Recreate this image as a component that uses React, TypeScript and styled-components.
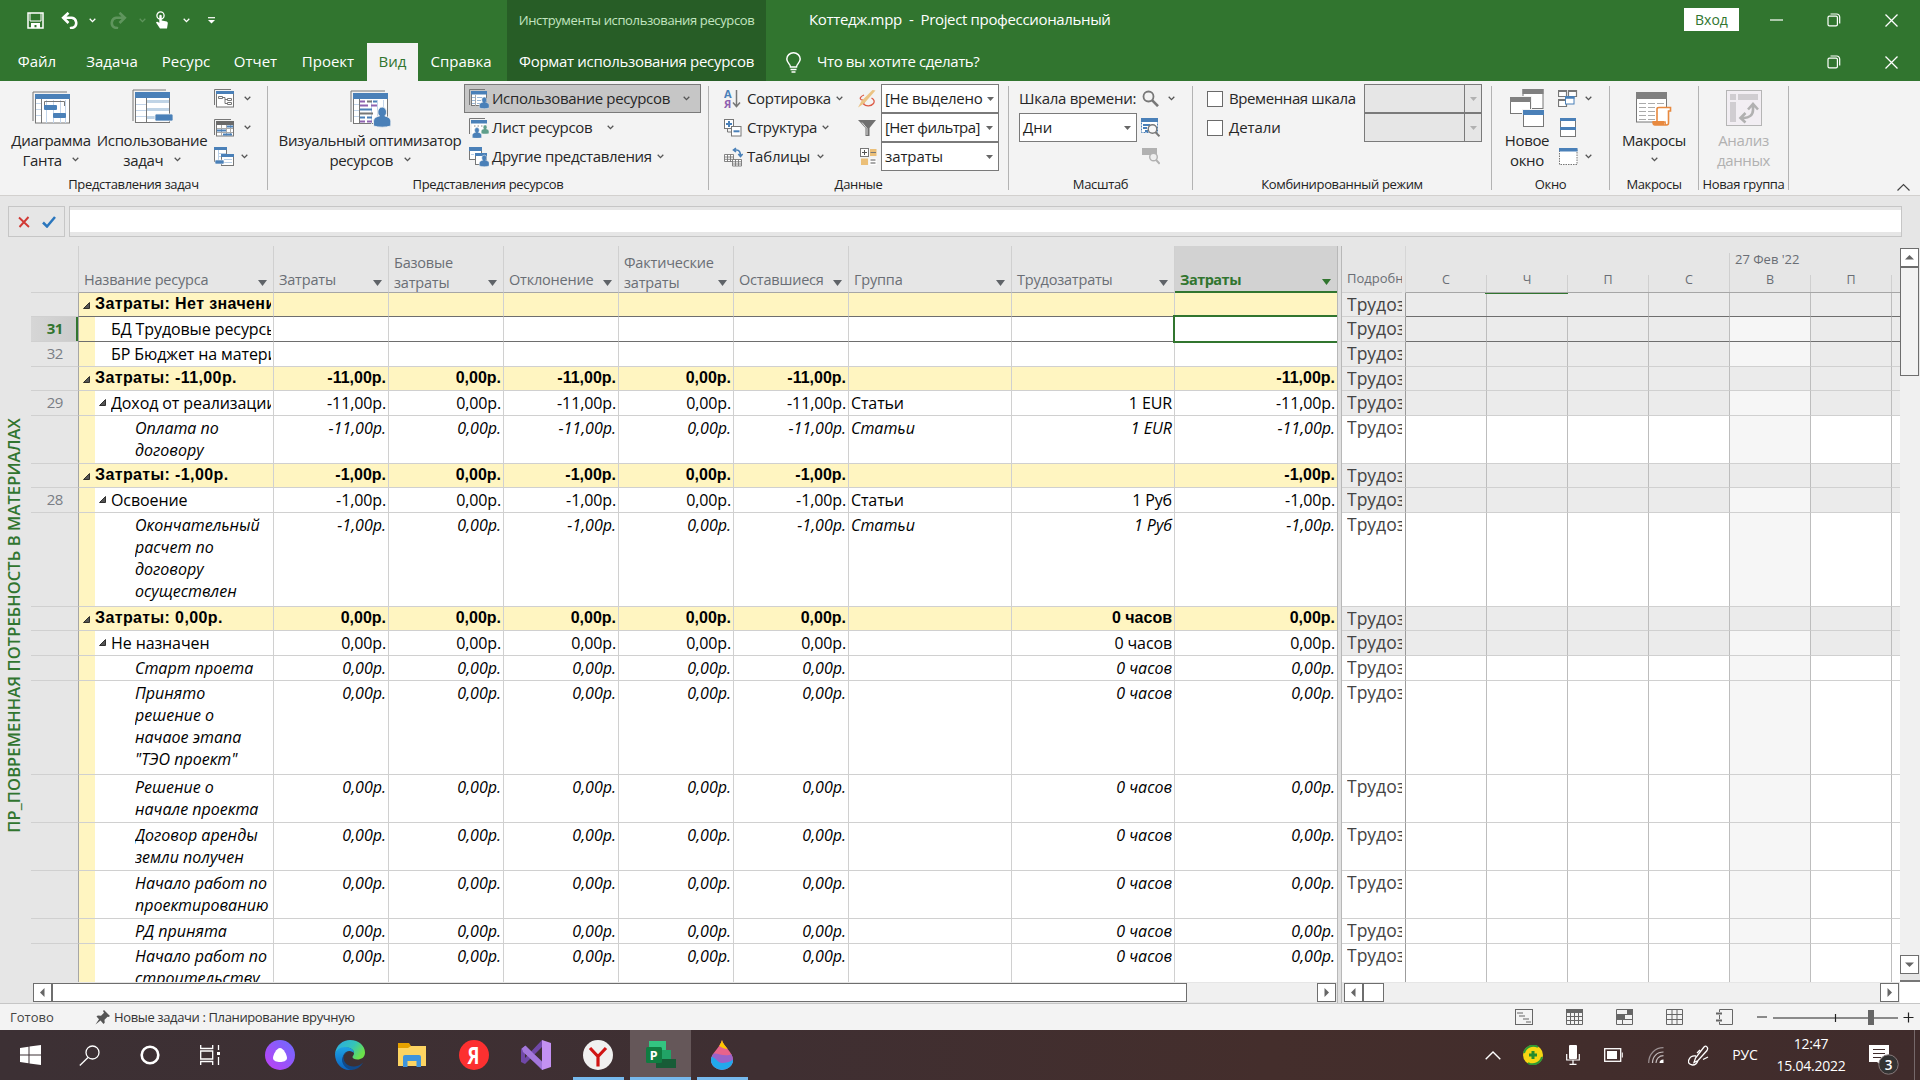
import React from "react";
import styled, { createGlobalStyle, css } from "styled-components";

const UI = `"Open Sans", "Noto Sans", sans-serif`;
const GREEN = "#31752f";

const Global = createGlobalStyle`
  * { box-sizing: border-box; }
  body { margin: 0; background: #e6e6e6; overflow: hidden; font-family: ${UI}; }
  svg { display: block; flex: none; }
`;

const Screen = styled.div`
  width: 1920px;
  height: 1080px;
  display: flex;
  flex-direction: column;
  background: #e6e6e6;
  font-family: ${UI};
  font-size: 15px;
  color: #262626;
  white-space: pre;
`;

const T = styled.span<{ $ls?: number; $size?: number }>`
  margin-bottom: 2px;
  letter-spacing: ${(p) => p.$ls ?? -0.33}px;
  ${(p) => p.$size && css`font-size: ${p.$size}px;`}
`;

/* ---------- title bar and tabs ---------- */
const Head = styled.header`
  height: 81px;
  flex: none;
  display: grid;
  grid-template-columns: 507px 259px 1fr;
  background: ${GREEN};
  color: #fff;
`;
const HeadPart = styled.div<{ $dark?: boolean }>`
  display: grid;
  grid-template-rows: 43px 38px;
  background: ${(p) => (p.$dark ? "#275d26" : "transparent")};
`;
const HeadRow = styled.div<{ $pad?: number; $up?: number }>`
  display: flex;
  align-items: center;
  padding-left: ${(p) => p.$pad ?? 0}px;
  padding-bottom: ${(p) => p.$up ?? 0}px;
`;
const Slot = styled.div<{ $w: number }>`
  width: ${(p) => p.$w}px;
  height: 100%;
  flex: none;
  display: flex;
  align-items: center;
  justify-content: center;
`;
const Tab = styled.div<{ $w: number; $active?: boolean }>`
  width: ${(p) => p.$w}px;
  height: 38px;
  display: flex;
  align-items: center;
  justify-content: center;
  padding-bottom: 3px;
  flex: none;
  background: ${(p) => (p.$active ? "#f3f3f3" : "transparent")};
  color: ${(p) => (p.$active ? GREEN : "#fff")};
`;
const ContextTitle = styled.div`
  display: flex;
  align-items: center;
  justify-content: center;
  color: #c3e5c0;
  font-size: 13px;
  letter-spacing: -0.37px;
  padding-bottom: 4px;
`;
const ContextTab = styled.div`
  display: flex;
  align-items: center;
  justify-content: center;
  letter-spacing: -0.3px;
  padding-bottom: 3px;
`;
const Title = styled.div`
  width: 918px;
  padding: 0 0 3px 43px;
  letter-spacing: -0.34px;
`;
const SignIn = styled.div`
  width: 55px;
  height: 23px;
  margin-bottom: 1px;
  background: #fff;
  color: ${GREEN};
  display: flex;
  align-items: center;
  justify-content: center;
  font-size: 14px;
`;
const Hint = styled.div`
  width: 1021px;
  padding: 0 0 2px 16px;
  letter-spacing: -0.38px;
`;

/* ---------- ribbon ---------- */
const Ribbon = styled.div`
  height: 115px;
  flex: none;
  display: flex;
  background: #f3f3f3;
  border-bottom: 1px solid #d2d0ce;
`;
const Group = styled.section<{ $w: number }>`
  width: ${(p) => p.$w}px;
  height: 104px;
  margin-top: 5px;
  border-right: 1px solid #b3b3b3;
  flex: none;
  display: flex;
  flex-direction: column;
`;
const GroupBody = styled.div`
  height: 87px;
  margin-top: -2px;
  display: flex;
`;
const GroupLabel = styled.div`
  height: 19px;
  line-height: 27px;
  font-size: 13px;
  letter-spacing: -0.35px;
  text-align: center;
  color: #222;
`;
const Big = styled.div<{ $w: number; $ml?: number; $off?: boolean }>`
  width: ${(p) => p.$w}px;
  margin-left: ${(p) => p.$ml ?? 0}px;
  flex: none;
  display: flex;
  flex-direction: column;
  align-items: center;
  color: ${(p) => (p.$off ? "#b1b1b1" : "#262626")};
`;
const BigIcon = styled.div<{ $pb?: number }>`
  height: 46px;
  display: flex;
  align-items: flex-end;
  padding-bottom: ${(p) => p.$pb ?? 3}px;
`;
const BigLine = styled.div`
  height: 20px;
  line-height: 20px;
  letter-spacing: -0.35px;
  display: flex;
  align-items: center;
  gap: 7px;
  svg { margin-bottom: 2px; }
`;
const Col = styled.div<{ $ml?: number; $w?: number }>`
  margin-left: ${(p) => p.$ml ?? 0}px;
  ${(p) => p.$w && css`width: ${p.$w}px;`}
  flex: none;
  display: grid;
  grid-template-rows: repeat(3, 29px);
`;
const Item = styled.div<{ $on?: boolean; $gap?: number; $pad?: number }>`
  display: flex;
  align-items: center;
  gap: ${(p) => p.$gap ?? 4}px;
  padding-left: ${(p) => p.$pad ?? 0}px;
  ${(p) => p.$on && css`
    background: #c6c6c6;
    box-shadow: inset 0 0 0 1px #7a7a7a;
  `}
`;
const Combo = styled.div<{ $off?: boolean }>`
  width: 118px;
  height: 29px;
  display: flex;
  align-items: center;
  justify-content: space-between;
  padding-left: 3px;
  border: 1px solid #7a7a7a;
  background: ${(p) => (p.$off ? "#e6e6e6" : "#fff")};
  color: #1e1e1e;
`;
const ComboArrow = styled.div<{ $off?: boolean }>`
  width: 17px;
  height: 27px;
  flex: none;
  display: flex;
  align-items: center;
  justify-content: center;
  border-left: ${(p) => (p.$off ? "1px solid #7a7a7a" : "none")};
`;
const Box = styled.span`
  width: 16px;
  height: 16px;
  flex: none;
  border: 1px solid #6a6a6a;
  background: #fff;
`;
const Collapse = styled.div`
  flex: 1;
  display: flex;
  align-items: flex-end;
  justify-content: flex-end;
  padding: 0 10px 4px 0;
`;

/* ---------- entry bar ---------- */
const Entry = styled.div`
  height: 50px;
  flex: none;
  display: flex;
  padding: 10px 18px 9px 8px;
  gap: 4px;
`;
const EntryButtons = styled.div`
  width: 57px;
  border: 1px solid #c6c6c6;
  display: flex;
  align-items: center;
  justify-content: center;
  gap: 12px;
`;
const EntryField = styled.div`
  flex: 1;
  border: 1px solid #c6c6c6;
  padding: 3px 0 4px;
  display: flex;
`;
const EntryInner = styled.div`
  flex: 1;
  background: #fff;
`;

/* ---------- work area ---------- */
const Work = styled.main`
  height: 757px;
  flex: none;
  display: flex;
`;
const Side = styled.aside`
  width: 31px;
  flex: none;
  display: flex;
  align-items: center;
  justify-content: center;
  padding: 2px 4px 0 0;
`;
const SideText = styled.div`
  writing-mode: vertical-rl;
  transform: rotate(180deg);
  color: ${GREEN};
  font-weight: 600;
  font-size: 16.5px;
  letter-spacing: 0.1px;
  white-space: nowrap;
`;
const Pane = styled.div<{ $w: number }>`
  width: ${(p) => p.$w}px;
  flex: none;
  display: flex;
  flex-direction: column;
`;
const TABLE_COLS = "47px 196px repeat(5, 115px) 163px 163px 162px";
const TableHead = styled.div`
  height: 47px;
  flex: none;
  display: grid;
  grid-template-columns: ${TABLE_COLS};
`;
const HeadCell = styled.div<{ $sel?: boolean; $first?: boolean; $corner?: boolean }>`
  display: flex;
  align-items: flex-end;
  justify-content: space-between;
  padding: 0 6px 0 5px;
  line-height: 20px;
  font-size: 14.5px;
  color: #6a6e75;
  border-right: 1px solid #d0d0d0;
  border-bottom: 1px solid #a6a6a6;
  ${(p) => p.$first && css`border-left: 1px solid #d0d0d0;`}
  ${(p) => p.$corner && css`border-right: 0; border-bottom-color: #d0d0d0;`}
  ${(p) => p.$sel && css`
    background: #d2d2d2;
    color: ${GREEN};
    font-weight: 700;
    border-right: 0;
    border-bottom: 2px solid ${GREEN};
  `}
`;
const HeadText = styled.span<{ $two?: boolean; $sel?: boolean }>`
  margin-bottom: ${(p) => (p.$two ? -1 : p.$sel ? 1 : 2)}px;
  letter-spacing: ${(p) => (p.$sel ? -0.5 : -0.2)}px;
`;
const HeadArrow = styled.span`
  padding-bottom: 6px;
`;
const Body = styled.div`
  height: 689px;
  flex: none;
  overflow: hidden;
`;
type Kind = "group" | "res" | "task";
const Row = styled.div<{ $h: number; $kind: Kind; $line?: boolean }>`
  height: ${(p) => p.$h}px;
  display: grid;
  grid-template-columns: ${TABLE_COLS};
  --line: ${(p) => (p.$line ? "#6e6e6e" : "#d0d0d0")};
  background: ${(p) => (p.$kind === "group" ? "#fff5c1" : "#fff")};
  color: #000;
  line-height: 22px;
  font-size: 16px;
  letter-spacing: ${(p) => (p.$kind === "res" ? -0.12 : 0)}px;
  ${(p) => p.$kind === "group" && css`
    font: bold 16px/22px "Liberation Sans", Arial, sans-serif;
  `}
  ${(p) => p.$kind === "task" && css`font-style: italic;`}
`;
const Num = styled.div<{ $sel?: boolean }>`
  background: #e6e6e6;
  border-bottom: 1px solid #d0d0d0;
  text-align: right;
  padding-right: 15px;
  font-size: 15px;
  line-height: 22px;
  letter-spacing: -0.4px;
  color: #7a7e85;
  ${(p) => p.$sel && css`
    background: linear-gradient(90deg, #d6d6d6, #cbcbcb);
    box-shadow: inset -2px 0 0 ${GREEN};
    color: ${GREEN};
    font-weight: 700;
  `}
`;
const Name = styled.div<{ $kind: Kind }>`
  overflow: hidden;
  border-left: 1px solid #a6a6a6;
  border-right: 1px solid #d0d0d0;
  border-bottom: 1px solid var(--line);
  padding-right: 2px;
  display: flex;
  ${(p) => p.$kind !== "group" && css`
    background: linear-gradient(90deg, #fff5c1 16px, #fff 16px);
  `}
`;
const Toggle = styled.span<{ $pad: number; $w: number; $top: number }>`
  width: ${(p) => p.$w}px;
  padding: ${(p) => p.$top}px 0 0 ${(p) => p.$pad}px;
  flex: none;
`;
const NameText = styled.div<{ $kind: Kind }>`
  flex: 1;
  overflow: hidden;
  padding-top: ${(p) => (p.$kind === "group" ? 0 : 1)}px;
  letter-spacing: ${(p) => (p.$kind === "group" ? 0.38 : p.$kind === "res" ? -0.1 : 0)}px;
`;
const Cell = styled.div<{ $kind: Kind; $left?: boolean; $last?: boolean; $sel?: boolean }>`
  border-right: ${(p) => (p.$last ? 0 : 1)}px solid #d0d0d0;
  border-bottom: 1px solid var(--line);
  padding: ${(p) => (p.$kind === "group" ? 0 : 1)}px 2px 0 2px;
  text-align: ${(p) => (p.$left ? "left" : "right")};
  ${(p) => p.$sel && css`
    margin: -2px 0 -1px -2px;
    border: 2px solid ${GREEN};
    border-right: 0;
    position: relative;
  `}
`;
const Divider = styled.div`
  width: 5px;
  height: 757px;
  flex: none;
  background: #e1e1e1;
  border-left: 1px solid #b8b8b8;
  border-right: 1px solid #b8b8b8;
`;

/* ---------- time-phased pane ---------- */
const PhaseHead = styled.div`
  height: 47px;
  flex: none;
  display: grid;
  grid-template-columns: 63px 1fr;
  color: #6a6e75;
`;
const DetailHead = styled.div`
  overflow: hidden;
  padding: 21px 0 0 5px;
  margin-right: 3px;
  font-size: 13px;
  line-height: 22px;
  border-bottom: 1px solid #d0d0d0;
`;
const Scale = styled.div`
  display: grid;
  grid-template-rows: 29px 17px;
  border-left: 1px solid #d6d6d6;
  border-bottom: 1px solid #a6a6a6;
`;
const ScaleTop = styled.div`
  display: flex;
  padding: 7px 0 0 323px;
`;
const WeekLabel = styled.div`
  border-left: 1px solid #cfcfcf;
  padding-left: 5px;
  font-size: 13px;
  line-height: 13px;
`;
const Days = styled.div`
  display: grid;
  grid-template-columns: repeat(6, 81px) 1fr;
`;
const Day = styled.div`
  text-align: center;
  font-size: 12.5px;
  line-height: 10px;
  border-right: 1px solid #cfcfcf;
`;
const PhaseRow = styled.div<{ $h: number; $kind: Kind; $line?: boolean }>`
  height: ${(p) => p.$h}px;
  display: grid;
  grid-template-columns: 64px repeat(6, 81px) 1fr;
  --line: ${(p) => (p.$line ? "#6e6e6e" : "#d0d0d0")};
  background: ${(p) => (p.$kind === "task" ? "#fff" : "#ebebeb")};
`;
const Detail = styled.div<{ $kind: Kind }>`
  border-bottom: 1px solid #d0d0d0;
  border-right: 1px solid #9c9c9c;
  padding: 0 3px 0 5px;
  font-size: 17.5px;
  line-height: 23px;
  color: #444;
`;
const Clip = styled.div`
  overflow: hidden;
`;
const PCell = styled.div<{ $last?: boolean; $sun?: boolean; $mark?: boolean }>`
  border-right: ${(p) => (p.$last ? 0 : 1)}px solid #bdbdbd;
  border-bottom: 1px solid var(--line);
  ${(p) => p.$sun && css`background: #f6f6f6;`}
  ${(p) => p.$mark && css`
    margin: 0 -1px 0 -2px;
    box-shadow: inset 0 1px 0 ${GREEN}, inset 1px 0 0 #ebebeb, inset 2px 0 0 #bdbdbd;
    border-right-color: #ebebeb;
    padding-right: 1px;
  `}
`;

/* ---------- scroll bars ---------- */
const HScroll = styled.div<{ $ml: number; $mr: number }>`
  height: 19px;
  margin: 1px ${(p) => p.$mr}px 0 ${(p) => p.$ml}px;
  display: flex;
  background: #f0f0f0;
  justify-content: space-between;
`;
const Run = styled.div`
  display: flex;
`;
const SBtn = styled.div`
  width: 19px;
  height: 19px;
  flex: none;
  background: #fff;
  border: 1px solid #6e6e6e;
  display: flex;
  align-items: center;
  justify-content: center;
`;
const Thumb = styled.div<{ $w?: number; $h?: number }>`
  width: ${(p) => p.$w ?? 19}px;
  height: ${(p) => p.$h ?? 19}px;
  background: ${(p) => (p.$h ? "#f2f2f2" : "#fff")};
  border: 1px solid #6e6e6e;
`;
const VScroll = styled.div`
  width: 20px;
  height: 757px;
  display: flex;
  flex-direction: column;
  padding-top: 2px;
`;
const VTrack = styled.div`
  flex: 1;
  background: #f0f0f0;
`;
const Splitter = styled.div`
  height: 5px;
  margin-top: 3px;
  border-bottom: 2px solid #777;
  background: #e6e6e6;
`;
const Corner = styled.div`
  height: 21px;
  background: #fff;
`;

/* ---------- status bar ---------- */
const Status = styled.footer`
  height: 27px;
  flex: none;
  display: flex;
  align-items: center;
  background: #f3f3f3;
  border-top: 1px solid #c6c6c6;
  font-size: 13px;
  color: #333;
`;
const StatusLeft = styled.div`
  width: 1499px;
  display: flex;
  align-items: center;
  padding-left: 10px;
`;
const Ready = styled.span`
  width: 85px;
  color: #444;
`;
const Mode = styled.span`
  padding-left: 3px;
  letter-spacing: -0.37px;
`;

/* ---------- task bar ---------- */
const Taskbar = styled.nav`
  height: 50px;
  flex: none;
  display: flex;
  background: linear-gradient(90deg, #3c3034 0%, #3f2f32 40%, #442e2c 66%, #402c2c 100%);
  color: #fff;
`;
const TaskButton = styled.div<{ $w: number; $ml?: number; $run?: boolean; $on?: boolean }>`
  width: ${(p) => p.$w}px;
  margin-left: ${(p) => p.$ml ?? 0}px;
  flex: none;
  display: flex;
  align-items: center;
  justify-content: center;
  background: ${(p) => (p.$on ? "#655759" : "transparent")};
  ${(p) => p.$run && css`box-shadow: inset 0 -3px 0 #76b9ed;`}
`;
const Gap = styled.div`
  flex: 1;
`;
const Clock = styled.div`
  width: 88px;
  margin-left: -3px;
  flex: none;
  text-align: center;
  font-size: 14px;
  letter-spacing: -0.25px;
  line-height: 22px;
  padding-top: 3px;
`;
const Notes = styled.div`
  width: 59px;
  padding: 15px 0 0 14px;
`;
const Edge = styled.div`
  width: 6px;
  border-left: 1px solid #75686a;
`;

/* ---------- drawings ---------- */
const Chev = ({ c = "#555" }: { c?: string }) => (
  <svg width="7" height="5" viewBox="0 0 7 5"><path d="M.7 .8 3.5 3.6 6.3 .8" fill="none" stroke={c} strokeWidth="1.3" /></svg>
);
const Down = ({ c = "#666", w = 7 }: { c?: string; w?: number }) => (
  <svg width={w} height={w === 7 ? 4 : 6} viewBox="0 0 8 5" preserveAspectRatio="none"><path d="M0 0h8L4 5z" fill={c} /></svg>
);
const Tri = ({ r }: { r: number }) => (
  <svg width="9" height="9" viewBox="0 0 9 9"><path d="M2 4.500 6.500 0v9z" fill="#666" transform={`rotate(${r} 4.500 4.500)`} /></svg>
);
const Fold = () => (
  <svg width="7" height="7" viewBox="0 0 7 7"><path d="M6.500 .5v6h-6z" fill="#555" stroke="#111" strokeWidth=".8" /></svg>
);
const Restore = () => (
  <svg width="14" height="14" viewBox="0 0 14 14" fill="none" stroke="#fff" strokeWidth="1.2"><rect x="1" y="3.200" width="9.400" height="9.600" rx="1.400" /><path d="M3.500 1h6.200a3 3 0 0 1 3 3v6.500" /></svg>
);
const Close = () => (
  <svg width="13" height="13" viewBox="0 0 13 13" stroke="#fff" strokeWidth="1.3"><path d="M.5 .5l12 12M12.500 .5l-12 12" /></svg>
);
const Arrow = ({ flip, c }: { flip?: boolean; c: string }) => (
  <svg width="19" height="17" viewBox="0 0 19 17" fill="none" stroke={c} strokeWidth="2.6">
    <g transform={flip ? "translate(19 0) scale(-1 1)" : undefined}><path d="M7.500 .8 2.200 5.800 7.500 11M2.600 5.800h8.200a5.200 5.200 0 0 1 1.500 9.800l-3.400.6" /></g>
  </svg>
);
const B = "#4a80b8";
const G = "#777";
const Person = ({ x, y, s = 1, c = B }: { x: number; y: number; s?: number; c?: string }) => (
  <g transform={`translate(${x} ${y}) scale(${s})`}><path d="M4.500 5.500a4 4.500 0 1 1 8 0c0 2-.8 3-1.600 3.800 3 .6 5.600 2.200 5.600 5.200V18.500c-5 1.500-11 1.500-16 0V14.500c0-3 2-4.600 5.600-5.200C5.300 8.500 4.500 7.500 4.500 5.500z" fill={c} stroke="#f3f3f3" strokeWidth=".8" /></g>
);
const GanttIcon = () => (
  <svg width="38" height="33" viewBox="0 0 38 33">
    <path d="M1 30V1H35" fill="none" stroke={G} /><rect x="3.500" y="3.500" width="34" height="28.500" fill="#fff" stroke={G} /><rect x="3" y="3" width="35" height="5" fill={B} />
    <path d="M14.500 9v23M21.500 9v23M28.500 9v23M33.500 9v23M4 12.500h5M4 18.500h5M4 24.500h5" stroke="#c3d5ea" /><path d="M9.500 8v24M12.500 15v-4.500h20V15" stroke={G} fill="none" />
    <rect x="12" y="14" width="13" height="5" rx="1" fill={B} /><rect x="21" y="22" width="13" height="5" rx="1" fill={B} />
  </svg>
);
const UsageIcon = () => (
  <svg width="41" height="35" viewBox="0 0 41 35">
    <path d="M1 32V1H34" fill="none" stroke={G} /><rect x="3.500" y="3.500" width="34" height="30" fill="#fff" stroke={G} /><rect x="3" y="3" width="35" height="6" fill={B} />
    <path d="M15 12.500h22M15 20.500h22M15 28.500h22" stroke="#c0d4e6" strokeWidth="3" /><path d="M4 15.500h10M4 21.500h10M4 27.500h10" stroke="#c3d5ea" /><path d="M14.500 9v25" stroke={G} />
    <rect x="23" y="25" width="18" height="7" rx="1.500" fill={B} stroke="#f3f3f3" strokeWidth=".8" />
  </svg>
);
const PlannerIcon = () => (
  <svg width="41" height="38" viewBox="0 0 41 38">
    <path d="M1 32V1H35" fill="none" stroke={G} /><rect x="3.500" y="3.500" width="34" height="30" fill="#fff" stroke={G} /><rect x="3" y="3" width="35" height="6" fill={B} />
    <path d="M4 14.500h5M4 20.500h5M4 26.500h5M21.500 10v24M27.500 10v24M33.500 10v24" stroke="#c3d5ea" /><path d="M9.500 9v25" stroke={G} />
    <g strokeWidth="2"><path d="M10 11.500h5M21 15.500h6M10 31.500h5" stroke="#8e63b0" /><path d="M17 11.500h5M10 23.500h13" stroke={G} /><path d="M23 11.500h4M10 19.500h12M10 27.500h5M17 27.500h5" stroke={B} /><path d="M10 15.500h8M17 31.500h5" stroke="#8e63b0" /></g>
    <Person x={23} y={16} s={1.08} />
  </svg>
);
const NetIcon = () => (
  <svg width="20" height="19" viewBox="0 0 20 19"><path d="M.5 16V.5H17" fill="none" stroke={G} /><rect x="2.500" y="2.500" width="17" height="15.500" fill="#fff" stroke={G} /><rect x="2" y="2" width="18" height="3" fill={B} /><path d="M4.500 7.500h4v2h-4zM13.500 9.500h4v2h-4zM13.500 13.500h4v2h-4zM8.500 8.500h2.500v6h2M11 10.500h2" fill="none" stroke={G} /></svg>
);
const CalIcon = () => (
  <svg width="20" height="18" viewBox="0 0 20 18"><path d="M.5 16V.5H17" fill="none" stroke={G} /><rect x="2.500" y="2.500" width="17" height="14.500" fill="#fff" stroke={G} /><rect x="2" y="2" width="18" height="4" fill="#6a6a6a" /><path d="M3 9.500h16M3 13.500h16M7.500 6v11M12.500 6v11M16.500 6v11" stroke="#aaa" /><path d="M13 7.500h6M3 11.500h9M9 15.500h9" stroke={B} strokeWidth="2" /></svg>
);
const OtherIcon = () => (
  <svg width="20" height="19" viewBox="0 0 20 19"><rect x=".5" y=".5" width="12" height="14" fill="#fff" stroke={G} /><rect width="13" height="3" fill={B} /><path d="M4.500 3v11M5 6.500h7M5 9.500h7" stroke="#b9cfe6" /><rect x="7.500" y="7.500" width="12" height="11" fill="#fff" stroke={G} /><rect x="7" y="7" width="13" height="3" fill={B} /><path d="M10 12.500h8M10 15.500h8" stroke="#b9cfe6" /><rect x="1" y="13" width="9" height="4" rx="1" fill={B} stroke="#f3f3f3" strokeWidth=".6" /></svg>
);
const ResIcon = ({ two, other }: { two?: boolean; other?: boolean }) => (
  <svg width="20" height="20" viewBox="0 0 20 20">
    {other ? (<><rect x=".5" y=".5" width="12" height="12" fill="#fff" stroke={G} /><rect width="13" height="4" fill={B} /><rect x="6.500" y="6.500" width="11" height="11" fill="#fff" stroke={G} /><rect x="6" y="6" width="12" height="3" fill={B} /><path d="M2 7.500h3" stroke="#b9cfe6" /></>)
      : (<><path d="M.5 16V.5H16" fill="none" stroke={G} /><rect x="2.500" y="2.500" width="15" height="14" fill="#fff" stroke={two ? "#f3f3f3" : G} /><rect x="2" y="2" width="16" height="3.500" fill={B} />
        {two ? <path d="M5 8h12" stroke="#888" strokeDasharray="1.500 2" /> : <><path d="M8 8.500h5M8 11.500h4M8 14.500h4M3 8.500h3M3 11.500h3M3 14.500h3" stroke="#9bb8d6" /><path d="M6.500 6v11" stroke="#aaa" /></>}</>)}
    {two ? <><Person x={12} y={6.5} s={0.48} c="#5f9f8b" /><Person x={3} y={9} s={0.58} /></> : <Person x={10} y={7.5} s={0.62} />}
  </svg>
);
const SortIcon = () => (
  <svg width="18" height="20" viewBox="0 0 18 20"><text x="0" y="9" fontSize="11" fontWeight="700" fill={B} fontFamily="Open Sans">А</text><text x="0" y="19" fontSize="11" fontWeight="700" fill="#8e5fb0" fontFamily="Open Sans">Я</text><path d="M12.500 1v16M9 13.500l3.500 4 3.500-4" fill="none" stroke={G} strokeWidth="1.500" /></svg>
);
const StructIcon = () => (
  <svg width="18" height="18" viewBox="0 0 18 18" fill="#fff"><rect x=".5" y=".5" width="9" height="9" stroke={G} /><path d="M2 5h6M5 2v6" stroke={B} strokeWidth="2" /><path d="M3.500 10v3h4" fill="none" stroke={G} /><rect x="7.500" y="7.500" width="9.500" height="9.500" stroke={G} /><path d="M9.500 12.300h6" stroke={B} strokeWidth="2" /></svg>
);
const TablesIcon = () => (
  <svg width="19" height="20" viewBox="0 0 19 20"><g fill="#fff" stroke={G} strokeWidth=".9"><path d="M.5 7.500h9v7h-9zM.5 10h9M.5 12.300h9M3.500 7.500v7M6.500 7.500v7" /><path d="M8.500 12.500h9v6.500h-9zM8.500 14.800h9M8.500 17h9M11.500 12.500v6.500M14.500 12.500v6.500" /></g><path d="M12 1 9.500 3 12 5M9.500 3h3c2.500 0 4 1 4 6M14.300 7l2.200 2.500L18.700 7" fill="none" stroke={B} strokeWidth="1.600" /></svg>
);
const BrushIcon = () => (
  <svg width="18" height="18" viewBox="0 0 18 18"><path d="M6 5C2 6.500 1 9 4 10c3 .5 2.500 2 1.500 4 2 2 7 3 10-.5 1.500-2 .5-4-2-5.500" fill="none" stroke="#dc5a45" strokeWidth="1.300" /><path d="M17.500 .5 7 12.500l-4 3L0 17.500 3.500 11 14.500 0z" fill="#ebc383" /></svg>
);
const FunnelIcon = () => (
  <svg width="18" height="18" viewBox="0 0 18 18"><path d="M0 1h18L11.500 9v8h-4V9z" fill="#707070" /><path d="M4 3.500 9 9.500V16" stroke="#ddd" fill="none" /></svg>
);
const GroupIcon = () => (
  <svg width="17" height="17" viewBox="0 0 17 17"><rect x=".5" y=".5" width="8" height="8" fill="#fff" stroke={G} /><path d="M2 4.500h5M4.500 2v5" stroke="#555" /><rect x="10" y="1" width="6.500" height="7" fill="#ebbf78" /><path d="M10.500 4.500h5.500" stroke="#777" /><rect x="1" y="10.500" width="7" height="6.500" fill="#ebbf78" /><rect x="9.500" y="10.500" width="7" height="6.500" fill="#fff" /><path d="M10.500 12h5M10.500 15h5" stroke="#555" /></svg>
);
const Lens = () => (
  <svg width="17" height="17" viewBox="0 0 17 17" fill="none" stroke={G}><circle cx="6.500" cy="6.500" r="5" strokeWidth="1.800" /><path d="M10 10.200l6 6" strokeWidth="2.600" /></svg>
);
const LensTable = () => (
  <svg width="19" height="19" viewBox="0 0 19 19"><rect x=".5" y=".5" width="16" height="14" fill="#fff" stroke={B} strokeDasharray="2 1" /><rect width="17" height="4" fill={B} /><path d="M2 7h7M2 10h4M4 13h3" stroke={B} strokeWidth="2" /><circle cx="11.500" cy="11" r="4.300" fill="#f8f8f8" stroke={G} strokeWidth="1.400" /><path d="M14.500 14.300l4 4" stroke={G} strokeWidth="2" /></svg>
);
const LensOff = () => (
  <svg width="18" height="17" viewBox="0 0 18 17"><rect width="15" height="7" fill="#b1b1b1" /><circle cx="11.500" cy="9" r="3.800" fill="#eee" stroke="#b1b1b1" strokeWidth="1.400" /><path d="M14.200 12l3.500 3.800" stroke="#b1b1b1" strokeWidth="2" /></svg>
);
const NewWin = () => (
  <svg width="34" height="38" viewBox="0 0 34 38">{[[12.5, 0, "#808080"], [0, 8, "#808080"], [13, 21, B]].map(([x, y, c]: any, i) => (<g key={i} transform={`translate(${x} ${y})`}><rect x="-1" y="-1" width="23" height="22" fill="#f3f3f3" /><rect x=".5" y=".5" width="20" height={i === 0 ? 19 : 16} fill="#fff" stroke={G} /><rect width="21" height="5" fill={c} /></g>))}</svg>
);
const Arrange = () => (
  <svg width="20" height="17" viewBox="0 0 20 17" fill="#fff" stroke={G}><path d="M.5 .5h8v6h-8zM10.500 .5h8v6h-8zM.5 9.500h8v7h-8z" strokeWidth="1.200" /><path d="M0 1h9M10 1h9M0 10h9" strokeWidth="2" /><rect x="7.500" y="6.500" width="8.500" height="7.500" stroke={B} /><path d="M7 7.500h9.500" stroke={B} strokeWidth="2.500" /></svg>
);
const SplitIcon = () => (
  <svg width="16" height="19" viewBox="0 0 16 19"><rect x=".5" y=".5" width="15" height="18" fill="#fff" stroke={G} /><rect width="16" height="3" fill={B} /><rect y="9" width="16" height="3" fill={B} /></svg>
);
const HideIcon = () => (
  <svg width="19" height="17" viewBox="0 0 19 17"><rect x=".5" y="1.500" width="17.500" height="15" fill="#fff" stroke={G} strokeDasharray="1.500 1" /><rect width="18.500" height="3.500" fill={B} /></svg>
);
const MacroIcon = () => (
  <svg width="36" height="34" viewBox="0 0 36 34"><rect x=".5" y=".5" width="30" height="29.500" fill="#fff" stroke={G} /><rect width="31" height="7" fill="#808080" /><path d="M3 11.500h25M3 15.500h25M3 19.500h25M3 23.500h25M3 27.500h25" stroke="#aaa" strokeDasharray="7 2" /><path d="M21 31V17q0-1.500 2-1.500h11.500v3.500h-2V31q0 2-2 2H19q-2 0-2-3h12q0 3 1.500 3" fill="#fff" stroke="#e8893f" strokeWidth="1.600" /><path d="M17 29h11v4H19q-2 0-2-4z" fill="#e8893f" /></svg>
);
const AnalyzeIcon = () => (
  <svg width="36" height="36" viewBox="0 0 36 36"><rect x=".5" y=".5" width="35" height="35" fill="#f2eef3" stroke="#b5b5b5" /><path d="M4 4h6v6H4zM12 4h20v6H12zM4 12h6v20H4z" fill="#d0cdd1" /><path d="M27 15v5c0 5-4 8-9 8h-3M22 19.500l5-5.500 5 5.500M19.500 23l-5 5 5 4.500" fill="none" stroke="#b1b1b1" strokeWidth="2.600" /></svg>
);

/* ---------- data ---------- */
type R = { k: Kind; h: number; n?: string; t: string; v?: string; w?: string; g?: string; fold?: boolean; sel?: boolean; line?: boolean };
const rows: R[] = [
  { k: "group", h: 24, t: "Затраты: Нет значения", fold: true, line: true },
  { k: "res", h: 25, n: "31", t: "БД Трудовые ресурсы", sel: true, line: true },
  { k: "res", h: 25, n: "32", t: "БР Бюджет на материалы" },
  { k: "group", h: 24, t: "Затраты: -11,00р.", v: "-11,00р.", fold: true },
  { k: "res", h: 25, n: "29", t: "Доход от реализации", v: "-11,00р.", g: "Статьи", w: "1 EUR", fold: true },
  { k: "task", h: 48, t: "Оплата по\nдоговору", v: "-11,00р.", g: "Статьи", w: "1 EUR" },
  { k: "group", h: 24, t: "Затраты: -1,00р.", v: "-1,00р.", fold: true },
  { k: "res", h: 25, n: "28", t: "Освоение", v: "-1,00р.", g: "Статьи", w: "1 Руб", fold: true },
  { k: "task", h: 94, t: "Окончательный\nрасчет по\nдоговору\nосуществлен", v: "-1,00р.", g: "Статьи", w: "1 Руб" },
  { k: "group", h: 24, t: "Затраты: 0,00р.", v: "0,00р.", w: "0 часов", fold: true },
  { k: "res", h: 25, t: "Не назначен", v: "0,00р.", w: "0 часов", fold: true },
  { k: "task", h: 25, t: "Старт проета", v: "0,00р.", w: "0 часов" },
  { k: "task", h: 94, t: "Принято\nрешение о\nначаое этапа\n\"ТЭО проект\"", v: "0,00р.", w: "0 часов" },
  { k: "task", h: 48, t: "Решение о\nначале проекта", v: "0,00р.", w: "0 часов" },
  { k: "task", h: 48, t: "Договор аренды\nземли получен", v: "0,00р.", w: "0 часов" },
  { k: "task", h: 48, t: "Начало работ по\nпроектированию", v: "0,00р.", w: "0 часов" },
  { k: "task", h: 25, t: "РД принята", v: "0,00р.", w: "0 часов" },
  { k: "task", h: 48, t: "Начало работ по\nстроительству", v: "0,00р.", w: "0 часов" },
];
const heads = [
  "Название ресурса", "Затраты", "Базовые\nзатраты", "Отклонение", "Фактические\nзатраты",
  "Оставшиеся", "Группа", "Трудозатраты", "Затраты",
];
const tabs: [string, number][] = [
  ["Файл", 74], ["Задача", 76], ["Ресурс", 72], ["Отчет", 67], ["Проект", 78], ["Вид", 51], ["Справка", 86],
];

const TaskTable = () => (
  <Pane $w={1306}>
    <TableHead>
      <HeadCell $corner />
      {heads.map((h, i) => (
        <HeadCell key={i} $first={i === 0} $sel={i === 8}>
          <HeadText $two={h.includes("\n")} $sel={i === 8}>{h}</HeadText>
          <HeadArrow><Down w={9} c={i === 8 ? GREEN : "#5f6368"} /></HeadArrow>
        </HeadCell>
      ))}
    </TableHead>
    <Body>
      {rows.map((r, i) => {
        const base = r.v?.startsWith("-") ? "0,00р." : r.v;
        return (
          <Row key={i} $h={r.h} $kind={r.k} $line={r.line}>
            <Num $sel={r.sel}>{r.n}</Num>
            <Name $kind={r.k}>
              <Toggle $top={r.k === "group" ? 9 : 8} $pad={r.k === "group" ? 4 : 20} $w={r.k === "group" ? 16 : r.k === "res" ? 32 : 56}>{r.fold && <Fold />}</Toggle>
              <NameText $kind={r.k}>{r.t}</NameText>
            </Name>
            {[r.v, base, r.v, base, r.v].map((v, j) => <Cell key={j} $kind={r.k}>{v}</Cell>)}
            <Cell $kind={r.k} $left>{r.g}</Cell>
            <Cell $kind={r.k}>{r.w}</Cell>
            <Cell $kind={r.k} $last $sel={r.sel}>{r.v}</Cell>
          </Row>
        );
      })}
    </Body>
    <HScroll $ml={2} $mr={1}>
      <Run><SBtn><Tri r={0} /></SBtn><Thumb $w={1135} /></Run>
      <SBtn><Tri r={180} /></SBtn>
    </HScroll>
  </Pane>
);

const PhasePane = () => (
  <Pane $w={558}>
    <PhaseHead>
      <DetailHead>Подробности</DetailHead>
      <Scale>
        <ScaleTop><WeekLabel>27 Фев '22</WeekLabel></ScaleTop>
        <Days>{["С", "Ч", "П", "С", "В", "П"].map((d, i) => <Day key={i}>{d}</Day>)}</Days>
      </Scale>
    </PhaseHead>
    <Body>
      {rows.map((r, i) => (
        <PhaseRow key={i} $h={r.h} $kind={r.k} $line={r.line}>
          <Detail $kind={r.k}><Clip>Трудозатр.</Clip></Detail>
          {[0, 1, 2, 3, 4, 5, 6].map((c) => (
            <PCell key={c} $last={c === 6} $sun={c === 4 && r.k !== "group"} $mark={i === 0 && c === 1} />
          ))}
        </PhaseRow>
      ))}
    </Body>
    <HScroll $ml={2} $mr={1}>
      <Run><SBtn><Tri r={0} /></SBtn><Thumb $w={21} /></Run>
      <SBtn><Tri r={180} /></SBtn>
    </HScroll>
  </Pane>
);

const RibbonBar = () => (
  <Ribbon>
    <Group $w={268}>
      <GroupBody>
        <Big $w={90} $ml={6}><BigIcon $pb={6}><GanttIcon /></BigIcon><BigLine>Диаграмма</BigLine><BigLine>Ганта <Chev /></BigLine></Big>
        <Big $w={112}><BigIcon $pb={6}><UsageIcon /></BigIcon><BigLine>Использование</BigLine><BigLine>задач <Chev /></BigLine></Big>
        <Col $ml={6}><Item $gap={10}><NetIcon /><Chev /></Item><Item $gap={10}><CalIcon /><Chev /></Item><Item $gap={7}><OtherIcon /><Chev /></Item></Col>
      </GroupBody>
      <GroupLabel>Представления задач</GroupLabel>
    </Group>
    <Group $w={441}>
      <GroupBody>
        <Big $w={184} $ml={10}><BigIcon $pb={2}><PlannerIcon /></BigIcon><BigLine>Визуальный оптимизатор</BigLine><BigLine>ресурсов <Chev /></BigLine></Big>
        <Col $ml={2} $w={235}>
          <Item $on $pad={5} $gap={3}><ResIcon /><T>Использование ресурсов</T><Slot $w={28}><Chev /></Slot></Item>
          <Item $pad={5} $gap={3}><ResIcon two /><T>Лист ресурсов</T><Slot $w={30}><Chev /></Slot></Item>
          <Item $pad={5} $gap={3}><ResIcon other /><T>Другие представления</T><Slot $w={12}><Chev /></Slot></Item>
        </Col>
      </GroupBody>
      <GroupLabel>Представления ресурсов</GroupLabel>
    </Group>
    <Group $w={300}>
      <GroupBody>
        <Col $ml={15} $w={134}>
          <Item $gap={5}><SortIcon /><T>Сортировка</T><Chev /></Item>
          <Item $gap={5}><StructIcon /><T>Структура</T><Chev /></Item>
          <Item $gap={4}><TablesIcon /><T $ls={-0.2}>Таблицы</T><Slot $w={12}><Chev /></Slot></Item>
        </Col>
        <Col>
          <Item $gap={5}><BrushIcon /><Combo><T $ls={-0.3}>[Не выделено</T><ComboArrow><Down /></ComboArrow></Combo></Item>
          <Item $gap={5}><FunnelIcon /><Combo><T $ls={-0.6}>[Нет фильтра]</T><ComboArrow><Down /></ComboArrow></Combo></Item>
          <Item $gap={4} $pad={2}><GroupIcon /><Combo><T $ls={-0.1}>затраты</T><ComboArrow><Down /></ComboArrow></Combo></Item>
        </Col>
      </GroupBody>
      <GroupLabel>Данные</GroupLabel>
    </Group>
    <Group $w={184}>
      <GroupBody>
        <Col $ml={10} $w={122}><Item><T $ls={-0.28}>Шкала времени:</T></Item><Item><Combo><T $ls={0}>Дни</T><ComboArrow><Down /></ComboArrow></Combo></Item></Col>
        <Col><Item $gap={9} $pad={1}><Lens /><Chev /></Item><Item><LensTable /></Item><Item $pad={1}><LensOff /></Item></Col>
      </GroupBody>
      <GroupLabel>Масштаб</GroupLabel>
    </Group>
    <Group $w={299}>
      <GroupBody>
        <Col $ml={14} $w={157}><Item $gap={6}><Box /><T $ls={-0.4}>Временная шкала</T></Item><Item $gap={6}><Box /><T $ls={-0.1}>Детали</T></Item></Col>
        <Col><Combo $off><span /><ComboArrow $off><Down c="#b1b1b1" /></ComboArrow></Combo><Combo $off><span /><ComboArrow $off><Down c="#b1b1b1" /></ComboArrow></Combo></Col>
      </GroupBody>
      <GroupLabel>Комбинированный режим</GroupLabel>
    </Group>
    <Group $w={118}>
      <GroupBody>
        <Big $w={50} $ml={10}><BigIcon><NewWin /></BigIcon><BigLine>Новое</BigLine><BigLine>окно</BigLine></Big>
        <Col $ml={6}><Item $gap={7}><Arrange /><Chev /></Item><Item $pad={2}><SplitIcon /></Item><Item $gap={7} $pad={1}><HideIcon /><Chev /></Item></Col>
      </GroupBody>
      <GroupLabel>Окно</GroupLabel>
    </Group>
    <Group $w={89}>
      <GroupBody><Big $w={88}><BigIcon $pb={4}><MacroIcon /></BigIcon><BigLine>Макросы</BigLine><BigLine><Chev /></BigLine></Big></GroupBody>
      <GroupLabel>Макросы</GroupLabel>
    </Group>
    <Group $w={90}>
      <GroupBody><Big $w={89} $off><BigIcon $pb={4}><AnalyzeIcon /></BigIcon><BigLine>Анализ</BigLine><BigLine>данных</BigLine></Big></GroupBody>
      <GroupLabel>Новая группа</GroupLabel>
    </Group>
    <Collapse><svg width="13" height="8" viewBox="0 0 13 8"><path d="M.5 7.500l6-6 6 6" fill="none" stroke="#444" strokeWidth="1.200" /></svg></Collapse>
  </Ribbon>
);

const Header = () => (
  <Head>
    <HeadPart>
      <HeadRow $pad={22} $up={3}>
        <Slot $w={26}><svg width="17" height="17" viewBox="0 0 17 17"><path d="M1 1h15v15H1z" fill="none" stroke="#fff" strokeWidth="1.500" /><path d="M3 1v8h11V1" fill="none" stroke="#fff" /><path d="M4 11h9v5H9.500v-3H7.500v3H4z" fill="#fff" /></svg></Slot>
        <Slot $w={44}><Arrow c="#fff" /></Slot><Slot $w={0}><Chev c="#fff" /></Slot>
        <Slot $w={50}><Arrow flip c="#5f955d" /></Slot><Slot $w={0}><Chev c="#5f955d" /></Slot>
        <Slot $w={40}><svg width="14" height="18" viewBox="0 0 14 18"><circle cx="5.500" cy="4.500" r="3.600" fill="none" stroke="#fff" strokeWidth="1.300" /><path d="M4.300 4.500q1.200-1.500 2.400 0v5l5 1q1.300.5 1.100 2L12 17.500H5L1 11.500q1-1.500 3.300.5z" fill="#fff" /></svg></Slot>
        <Slot $w={8}><Chev c="#fff" /></Slot>
        <Slot $w={43}><svg width="7" height="7" viewBox="0 0 7 7"><path d="M0 .7h7" stroke="#fff" strokeWidth="1.200" /><path d="M0 3h7L3.500 6.500z" fill="#fff" /></svg></Slot>
      </HeadRow>
      <HeadRow>{tabs.map(([t, w]) => <Tab key={t} $w={w} $active={t === "Вид"}>{t}</Tab>)}</HeadRow>
    </HeadPart>
    <HeadPart $dark>
      <ContextTitle>Инструменты использования ресурсов</ContextTitle>
      <ContextTab>Формат использования ресурсов</ContextTab>
    </HeadPart>
    <HeadPart>
      <HeadRow $up={3}>
        <Title>Коттедж.mpp  -  Project профессиональный</Title>
        <SignIn>Вход</SignIn>
        <Slot $w={75}><svg width="13" height="2" viewBox="0 0 13 2"><path d="M0 1h13" stroke="#fff" strokeWidth="1.200" /></svg></Slot>
        <Slot $w={39}><Restore /></Slot>
        <Slot $w={76}><Close /></Slot>
      </HeadRow>
      <HeadRow $pad={20}>
        <svg width="15" height="21" viewBox="0 0 15 21" fill="none" stroke="#fff" strokeWidth="1.500"><path d="M4.500 15c0-3-3.700-4-3.700-8a6.700 6.200 0 0 1 13.400 0c0 4-3.700 5-3.700 8z" /><path d="M4.500 17.500h6M5.500 20h4" /></svg>
        <Hint>Что вы хотите сделать?</Hint>
        <Slot $w={24}><Restore /></Slot>
        <Slot $w={91}><Close /></Slot>
      </HeadRow>
    </HeadPart>
  </Head>
);

const StatusBar = () => (
  <Status>
    <StatusLeft>
      <Ready>Готово</Ready>
      <svg width="16" height="15" viewBox="0 0 16 15"><path d="M9 0l6 6-1.500 1-1-.3-3 3 .2 3L8.500 14 5.500 10.500.5 14.500 4 9.200 1.500 6.500 2.800 5.500l3.200.3 3-3L8 1z" fill="#555" /></svg>
      <Mode>Новые задачи : Планирование вручную</Mode>
    </StatusLeft>
    <Slot $w={50}><svg width="18" height="16" viewBox="0 0 18 16" fill="none" stroke="#666"><rect x=".5" y=".5" width="17" height="15" /><path d="M2 4h6M4 7h6M8 10h6M11 13h5" strokeWidth="1.200" /></svg></Slot>
    <Slot $w={50}><svg width="17" height="16" viewBox="0 0 17 16" fill="none" stroke="#666"><path d="M.5 .5h16v15H.5zM.5 7.500h16M.5 11.500h16M4.500 4v12M8.500 4v12M12.500 4v12" /><path d="M0 2h17" strokeWidth="4" /></svg></Slot>
    <Slot $w={50}><svg width="17" height="16" viewBox="0 0 17 16"><path d="M.5 .5h16v15H.5zM.5 10.500h16M.5 5.500h16M6.500 10v6" fill="none" stroke="#666" /><path d="M11 0h6v5h-6zM0 5h9v6H0z" fill="#666" /></svg></Slot>
    <Slot $w={50}><svg width="17" height="16" viewBox="0 0 17 16" fill="none" stroke="#666"><path d="M.5 .5h16v15H.5zM.5 5.500h16M.5 10.500h16M6 0v16M11 0v16" /></svg></Slot>
    <Slot $w={50}><svg width="17" height="16" viewBox="0 0 17 16" fill="none" stroke="#666"><path d="M3.500 3V.5h13v15h-13V13M3.500 6v4" /><path d="M0 4.500h6M0 11.500h6" strokeWidth="2" /></svg></Slot>
    <svg width="168" height="22" viewBox="0 0 168 22" stroke="#222" fill="none"><path d="M8 11h10M24 12h125M86.500 8v8M154.500 11.500h10M159.500 6.500v10" strokeWidth="1.200" /><rect x="119" y="4" width="6" height="15" fill="#666" stroke="none" /></svg>
  </Status>
);

const TaskBar = () => (
  <Taskbar>
    <TaskButton $w={60}><svg width="21" height="20" viewBox="0 0 21 20" fill="#fff"><path d="M0 3l8.500-1.200v7.700H0zM9.500 1.600 21 0v9.500H9.500zM0 10.500h8.500v7.700L0 17zM9.500 10.500H21V20L9.500 18.400z" /></svg></TaskButton>
    <TaskButton $w={60}><svg width="22" height="21" viewBox="0 0 22 21" fill="none" stroke="#fff" strokeWidth="1.300"><circle cx="13.500" cy="7.500" r="6.500" /><path d="M9 12.500.8 20.500" /></svg></TaskButton>
    <TaskButton $w={60}><svg width="20" height="20" viewBox="0 0 20 20" fill="none" stroke="#fff" strokeWidth="2.600"><circle cx="10" cy="10" r="8.300" /></svg></TaskButton>
    <TaskButton $w={60}><svg width="20" height="20" viewBox="0 0 20 20" fill="none" stroke="#fff" strokeWidth="1.300"><path d="M.7 0v3.500h12V0M.7 20v-3.500h12V20M.7 6h12v8H.7zM18.500 0v5M18.500 12v8" /><path d="M17 8.500h3" strokeWidth="3" /></svg></TaskButton>
    <TaskButton $w={62} $ml={9}><svg width="30" height="30" viewBox="0 0 30 30"><defs><linearGradient id="al" x1="0" y1="1" x2="1" y2="0"><stop offset="0" stopColor="#c13ff5" /><stop offset="1" stopColor="#6a6cff" /></linearGradient></defs><circle cx="15" cy="15" r="15" fill="url(#al)" /><path d="M15 8c3.500 0 7 7 7 10s-4 4-7 4-7-1-7-4 3.500-10 7-10z" fill="#fff" /></svg></TaskButton>
    <TaskButton $w={62} $ml={8}><svg width="30" height="30" viewBox="0 0 30 30"><defs><linearGradient id="e1" x1="0" y1="0" x2="1" y2=".5"><stop offset="0" stopColor="#2aa8e8" /><stop offset=".6" stopColor="#35c4b8" /><stop offset="1" stopColor="#6be04a" /></linearGradient><linearGradient id="e2" x1="0" y1="0" x2="0" y2="1"><stop offset="0" stopColor="#1ea3e4" /><stop offset="1" stopColor="#0b62c0" /></linearGradient></defs><path d="M0 14C1 5 8 0 15 0c9 0 15 6 15 12.500 0 5-4 7-7.500 7-3 0-5-1-5-2.500 0-1 1.500-1.500 1.500-4C19 9 14 7 10 8 5 9 1 11 0 14z" fill="url(#e1)" /><path d="M0 14c1-4 5-7 10-7 6 0 9 3.500 9 6-1-1-2.500-2-4.500-2C10 11 8 15 8 18c0 6 5 11 10 11.500C8 32 0 24 0 14z" fill="url(#e2)" /><path d="M8.500 17c0 6 5 10 11 9.500 4-.3 6-2 8.500-4C26 27 21 30 16 30c-5-1-9-6-9-10 0-3 2-7 6-8-3 1.500-4.500 3.500-4.500 5z" fill="#114a8b" /></svg></TaskButton>
    <TaskButton $w={62}><svg width="28" height="24" viewBox="0 0 28 24"><path d="M0 0h11l2 3h2v5H0z" fill="#e5a100" /><path d="M0 5h10l3-2h15v20H0z" fill="#fcd462" /><path d="M5 24V14q0-2 2-2h14q2 0 2 2v10h-4.500v-6h-9v6z" fill="#3e94dc" /></svg></TaskButton>
    <TaskButton $w={62}><svg width="30" height="30" viewBox="0 0 30 30"><circle cx="15" cy="15" r="15" fill="#fc3030" /><text x="8.500" y="23.500" fontSize="23" fontWeight="700" fill="#fff" textLength="12" lengthAdjust="spacingAndGlyphs" fontFamily="Open Sans">Я</text></svg></TaskButton>
    <TaskButton $w={62}><svg width="30" height="30" viewBox="0 0 30 30"><path d="M0 9l4-3 19 17-2 7z" fill="#8a5fc4" /><path d="M0 9v13l4 2 17-17V0L4 18V12z" fill="#7048a8" /><path d="M1 8.500 4.500 5.500 22 23v7L2 12z" fill="#a478dc" /><path d="M21 0l9 3v24l-9 3z" fill="#c391f2" /></svg></TaskButton>
    <TaskButton $w={51} $ml={6} $run><svg width="31" height="30" viewBox="0 0 31 30"><circle cx="15" cy="15" r="15" fill="#f0f0f0" /><path d="M7 8l8 8.500L23 8M15 16v10.500" fill="none" stroke="#d01414" strokeWidth="3.200" /></svg></TaskButton>
    <TaskButton $w={61} $ml={6} $run $on><svg width="30" height="28" viewBox="0 0 30 28"><path d="M3 0h17v10H3z" fill="#33c481" /><path d="M14 9h11v11H14z" fill="#21a366" /><path d="M10 18h20v9H10z" fill="#185c37" /><rect y="6" width="16" height="16" rx="1.500" fill="#107c41" /><text x="3.800" y="18.500" fontSize="12.500" fontWeight="700" fill="#fff" fontFamily="Open Sans">P</text></svg></TaskButton>
    <TaskButton $w={51} $ml={6} $run><svg width="26" height="30" viewBox="0 0 26 30"><defs><clipPath id="dr"><path d="M12 0c1 6 11 12 11 20a11 10 0 0 1-22 0C1 13 10 8 12 0z" /></clipPath></defs><g clipPath="url(#dr)"><rect width="24" height="30" fill="#e8638c" /><path d="M8 0h10v9q-5 0-10-4z" fill="#ffc800" /><path d="M0 17C5 8 12 20 24 13v10H0z" fill="#9a63c9" /><path d="M0 16c7 2 8 8 13 7 6-1 7-1 11-4v11H0z" fill="#22a9ec" /></g></svg></TaskButton>
    <Gap />
    <Slot $w={40}><svg width="16" height="9" viewBox="0 0 16 9"><path d="M.7 8.300 8 1l7.300 7.300" fill="none" stroke="#fff" strokeWidth="1.400" /></svg></Slot>
    <Slot $w={40}><svg width="20" height="20" viewBox="0 0 20 20"><circle cx="10" cy="10" r="10" fill="#f6d713" /><path d="M1 8A9.500 9.500 0 0 1 15 2M19 12A9.500 9.500 0 0 1 5 18" stroke="#2e9a35" strokeWidth="2" fill="none" /><path d="M10 6v8M6 10h8" stroke="#268c2e" strokeWidth="3" /></svg></Slot>
    <Slot $w={40}><svg width="14" height="20" viewBox="0 0 14 20"><rect x="3" y="0" width="8" height="14" rx="1" fill="#fff" /><path d="M.7 9v6h12.600V9M7 15v4M3.500 19.300h7" fill="none" stroke="#fff" strokeWidth="1.200" /></svg></Slot>
    <Slot $w={41}><svg width="19" height="14" viewBox="0 0 19 14"><rect x=".7" y=".7" width="16" height="12.600" fill="none" stroke="#fff" strokeWidth="1.300" /><rect x="3" y="3" width="10" height="8" fill="#fff" /><path d="M18.300 4.500v5" stroke="#fff" /></svg></Slot>
    <Slot $w={43}><svg width="16" height="16" viewBox="0 0 16 16" fill="none" strokeWidth="1.200"><path d="M.7 16C.7 7 7 .7 15.500.7" stroke="#9b9092" /><path d="M4.500 16C4.500 9.500 9 5 15.500 5M8 16c0-4 3-7.300 7.500-7.300" stroke="#c5bdbe" /><path d="M11.500 16q0-3.500 4-3.500V16z" fill="#fff" /></svg></Slot>
    <Slot $w={43}><svg width="21" height="21" viewBox="0 0 21 21" fill="none" stroke="#fff" strokeWidth="1.300"><path d="M18.500 1.500q2 1.500.5 4L10 15.500l-4 2 1.500-4.500L16 2q1.500-1.500 2.500-.5zM8 11Q3 10 1 14.500T4.500 20q4 0 5.500-4.500M12 5l-3 3M20 12l-5 2.500" /></svg></Slot>
    <Slot $w={50}><T $size={14} $ls={-0.2}>РУС</T></Slot>
    <Clock>12:47<br />15.04.2022</Clock>
    <Notes><svg width="31" height="32" viewBox="0 0 31 32"><path d="M0 0h20v17h-7v4l-5-4H0z" fill="#fff" /><path d="M4 4.500h12M4 8.500h12M4 12.500h8" stroke="#402c2c" strokeWidth="1.200" /><circle cx="19.500" cy="19.500" r="9.700" fill="#333" stroke="#85797a" /><text x="15.700" y="24.500" fontSize="13.500" fontWeight="600" fill="#fff" fontFamily="Open Sans">3</text></svg></Notes>
    <Edge />
  </Taskbar>
);

export default function App() {
  return (
    <Screen>
      <Global />
      <Header />
      <RibbonBar />
      <Entry>
        <EntryButtons>
          <svg width="12" height="12" viewBox="0 0 12 12"><path d="M1 1.500 11 11M10.500 1 1.500 11" stroke="#d13a35" strokeWidth="1.900" /></svg>
          <svg width="14" height="12" viewBox="0 0 14 12"><path d="M1 6.500 5 10.500 13 1" fill="none" stroke="#2a76bd" strokeWidth="2.500" /></svg>
        </EntryButtons>
        <EntryField><EntryInner /></EntryField>
      </Entry>
      <Work>
        <Side><SideText>ПР_ПОВРЕМЕННАЯ ПОТРЕБНОСТЬ В МАТЕРИАЛАХ</SideText></Side>
        <TaskTable />
        <Divider />
        <PhasePane />
        <VScroll>
          <SBtn><Tri r={90} /></SBtn>
          <Thumb $h={109} />
          <VTrack />
          <SBtn><Tri r={270} /></SBtn>
          <Splitter />
          <Corner />
        </VScroll>
      </Work>
      <StatusBar />
      <TaskBar />
    </Screen>
  );
}
